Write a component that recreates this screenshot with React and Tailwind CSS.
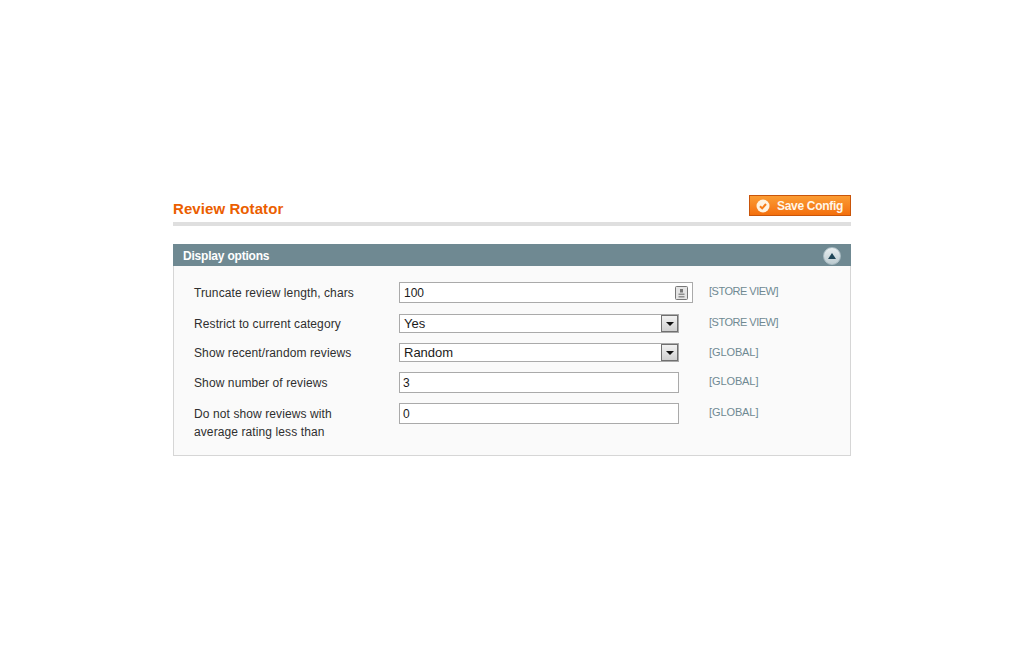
import React from 'react';

const SANS = "font-['Liberation_Sans',Arial,sans-serif]";

const CheckBadge = () => (
  <svg width="14" height="14" viewBox="0 0 14 14" className="shrink-0">
    <circle cx="7" cy="7" r="6.5" fill="#fff3e0" />
    <path d="M4 7.2l2.2 2.2L10 5" fill="none" stroke="#f77c16" strokeWidth="2" />
  </svg>
);

const CollapseIcon = () => (
  <span className="mt-[2px] flex h-[18px] w-[18px] items-center justify-center rounded-full border border-[#a9bcc3] bg-gradient-to-b from-[#e9eff1] to-[#bccbd0]">
    <svg width="8" height="6" viewBox="0 0 8 6">
      <path d="M4 0l4 6H0z" fill="#1f4557" />
    </svg>
  </span>
);

const TextInput = ({ value, wide }) => (
  <div className={`flex h-[21px] items-center justify-between border border-[#aaaaaa] bg-white pr-1 text-xs text-[#1a1a1a] ${wide ? 'w-[294px] pl-1' : 'w-[280px] pl-[3px]'}`}>
    <span>{value}</span>
    {wide && (
      <svg width="13" height="14" viewBox="0 0 13 14">
        <rect x="0.5" y="0.5" width="12" height="13" rx="1" fill="#e4e4e4" stroke="#777777" />
        <rect x="5" y="3" width="3" height="3.5" fill="#777777" />
        <rect x="3.5" y="7.5" width="6" height="1.5" fill="#8f8f8f" />
        <rect x="3.5" y="10" width="6" height="1.5" fill="#8f8f8f" />
      </svg>
    )}
  </div>
);

const SelectInput = ({ value }) => (
  <div className="flex h-[19px] w-[280px] items-center justify-between border border-[#aaaaaa] bg-white pl-1 text-[13px] text-[#1a1a1a]">
    <span>{value}</span>
    <span className="flex h-[17px] w-[17px] items-center justify-center border border-[#707070] bg-gradient-to-b from-[#f2f2f2] to-[#d0d0d0]">
      <svg width="8" height="4" viewBox="0 0 8 4">
        <path d="M0 0h8L4 4z" fill="#111" />
      </svg>
    </span>
  </div>
);

const rows = [
  { label: ['Truncate review length, chars'], scope: '[STORE VIEW]', field: <TextInput value="100" wide />, cls: 'h-[32px]', labelCls: 'pt-[2px]', scopeCls: 'mt-0 tracking-[-0.5px]' },
  { label: ['Restrict to current category'], scope: '[STORE VIEW]', field: <SelectInput value="Yes" />, cls: 'h-[29px]', labelCls: 'pt-[1px]', scopeCls: '-mt-[1px] tracking-[-0.5px]' },
  { label: ['Show recent/random reviews'], scope: '[GLOBAL]', field: <SelectInput value="Random" />, cls: 'h-[29px]', labelCls: 'pt-[1px]', scopeCls: 'mt-0 tracking-[-0.1px]' },
  { label: ['Show number of reviews'], scope: '[GLOBAL]', field: <TextInput value="3" />, cls: 'h-[31px]', labelCls: 'pt-[2px]', scopeCls: 'mt-0 tracking-[-0.1px]' },
  { label: ['Do not show reviews with', 'average rating less than'], scope: '[GLOBAL]', field: <TextInput value="0" />, cls: 'h-[40px]', labelCls: 'pt-[2px]', scopeCls: 'mt-0 tracking-[-0.1px]' },
];

export default function App() {
  return (
    <div className={`min-h-screen bg-white pt-[195px] ${SANS}`}>
      <div className="ml-[173px] w-[678px]">
        {/* Page heading */}
        <div className="flex h-[31px] items-start justify-between border-b-4 border-[#dfdfdf]">
          <h3 className="mt-[5px] text-[15px] leading-[18px] font-bold tracking-[0.08px] text-[#eb5e00]">Review Rotator</h3>
          <button className="flex h-[21px] w-[102px] items-center gap-[7px] border border-[#c9550a] bg-gradient-to-b from-[#fb9c32] to-[#f36f0b] pl-[6px] text-xs font-bold tracking-[-0.3px] text-[#fff6e8]">
            <CheckBadge />
            Save Config
          </button>
        </div>

        {/* Fieldset */}
        <div className="mt-[18px] flex h-[22px] items-center justify-between bg-[#6f8992] pl-[10px] pr-[10px] text-xs font-bold text-white">
          <span className="pt-[2px] tracking-[-0.2px]">Display options</span>
          <CollapseIcon />
        </div>
        <div className="h-[190px] border border-t-0 border-[#d6d6d6] bg-[#fafafa] pt-[16px] pl-[20px]">
          {rows.map((row) => (
            <div key={row.label[0]} className={`flex items-start ${row.cls}`}>
              <div className={`w-[205px] text-xs leading-[18px] tracking-[0.1px] text-[#2f2f2f] ${row.labelCls}`}>
                {row.label.map((line) => (
                  <div key={line}>{line}</div>
                ))}
              </div>
              <div className="w-[310px]">{row.field}</div>
              <div className={`text-[11px] leading-[18px] text-[#6f8992] ${row.scopeCls}`}>{row.scope}</div>
            </div>
          ))}
        </div>
      </div>
    </div>
  );
}
